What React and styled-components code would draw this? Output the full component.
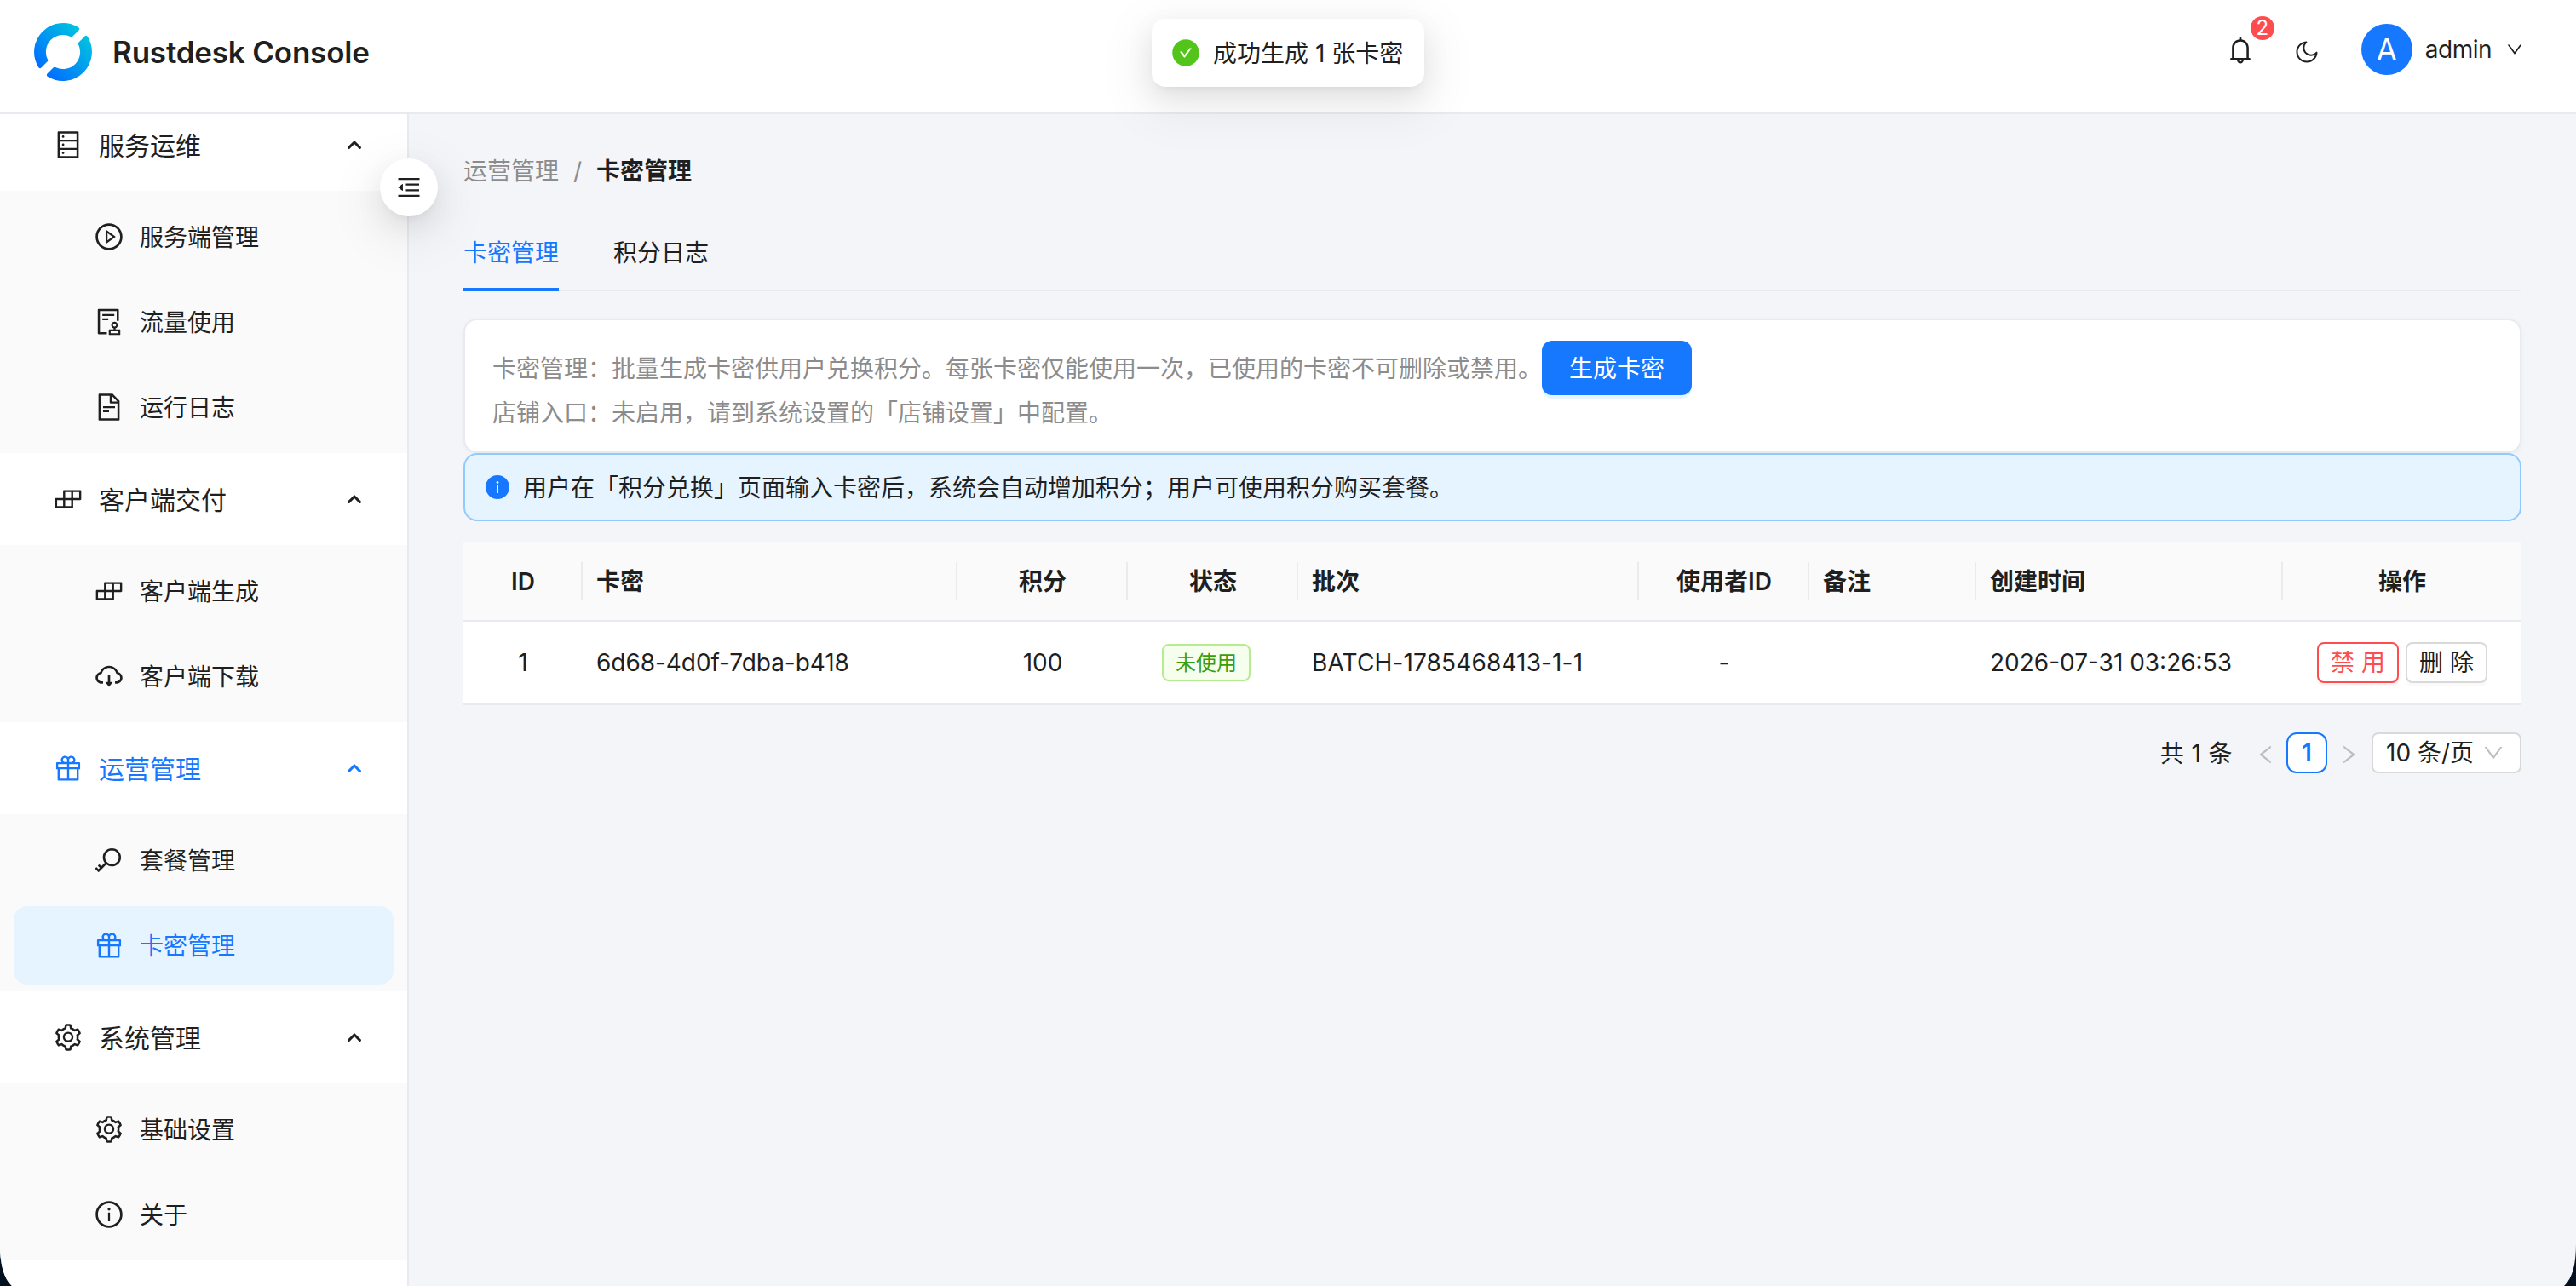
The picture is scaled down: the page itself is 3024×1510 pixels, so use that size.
import React from 'react'
import styled, { createGlobalStyle, css } from 'styled-components'
import {
  AiOutlineDatabase,
  AiOutlinePlayCircle,
  AiOutlineAudit,
  AiOutlineFileText,
  AiOutlineBuild,
  AiOutlineCloudDownload,
  AiOutlineGift,
  AiOutlineKey,
  AiOutlineSetting,
  AiOutlineInfoCircle,
  AiOutlineMenuFold,
  AiOutlineBell,
  AiOutlineDown,
  AiOutlineLeft,
  AiOutlineRight,
  AiFillCheckCircle,
  AiFillInfoCircle,
} from 'react-icons/ai'

const text = '#1f1f1f'
const primary = '#1677ff'
const line = '#e9eaef'

const GlobalStyle = createGlobalStyle`
    * {
        box-sizing: border-box;
    }
    body {
        margin: 0;
        background: #03101f;
        font-family: Inter, "Noto Sans CJK SC", sans-serif;
        font-size: 28px;
        line-height: 44px;
        color: ${text};
    }
    svg {
        display: block;
        flex: none;
    }
`

const Window = styled.div`
    position: relative;
    width: 3024px;
    height: 1510px;
    overflow: hidden;
    display: flex;
    flex-direction: column;
    background: #f3f5f9;
    clip-path: path('M0 0H3024V1460C3024 1484 3020 1501 3010 1510H14C4 1501 0 1484 0 1460Z');
`

const Header = styled.header`
    position: relative;
    z-index: 2;
    flex: none;
    height: 134px;
    display: flex;
    align-items: flex-start;
    justify-content: space-between;
    padding: 0 61px 0 39px;
    background: #fff;
    border-bottom: 2px solid ${line};
`

const Brand = styled.div`
    display: flex;
    align-items: center;
    gap: 23px;
    height: 122px;
`

const BrandName = styled.h1`
    margin: 0;
    font-size: 35px;
    font-weight: 600;
    letter-spacing: -0.2px;
    white-space: nowrap;
`

const HeaderActions = styled.div`
    display: flex;
    align-items: center;
    height: 116px;
`

const BellBox = styled.div`
    position: relative;
    margin: 2px 62px 0 0;
    font-size: 36px;
    width: 36px;
`

const Badge = styled.span`
    position: absolute;
    top: -22px;
    left: 30px;
    width: 28px;
    height: 28px;
    border-radius: 50%;
    background: #ff4d4f;
    color: #fff;
    font-size: 24px;
    line-height: 28px;
    text-align: center;
`

const MoonBox = styled.div`
    margin: 6px 48px 0 -18px;
`

const Avatar = styled.div`
    width: 60px;
    height: 60px;
    border-radius: 50%;
    background: ${primary};
    color: #fff;
    font-size: 35px;
    line-height: 60px;
    text-align: center;
`

const UserName = styled.span`
    margin: 0 16px 0 15px;
    letter-spacing: -0.5px;
`

/* ideographs sit a touch high in the line box, this evens them out */
const Label = styled.span`
    padding-top: ${(p) => p.$drop || 2}px;
`

const Body = styled.div`
    flex: 1;
    min-height: 0;
    display: flex;
`

const Sider = styled.aside`
    position: relative;
    flex: none;
    width: 480px;
    background: #fff;
    border-right: 2px solid ${line};
`

/* the list is scrolled a little under the header */
const Menu = styled.nav`
    margin-top: -18px;
`

const item = css`
    display: flex;
    align-items: center;
    gap: 18px;
    height: 92px;
    margin: 0 16px;
    border-radius: 16px;
    color: ${(p) => (p.$active ? primary : text)};

    svg {
        font-size: 36px;
    }
`

const GroupTitle = styled.div`
    ${item}
    height: 108px;
    padding: 0 38px 0 46px;
    font-size: 30px;

    span {
        flex: 1;
    }
`

const SubMenu = styled.div`
    display: flex;
    flex-direction: column;
    gap: 8px;
    padding: 8px 0;
    background: #fafafa;
`

const MenuItem = styled.div`
    ${item}
    padding: 0 32px 0 94px;
    background: ${(p) => (p.$active ? '#e6f4ff' : 'transparent')};
`

const FoldButton = styled.button`
    position: absolute;
    z-index: 1;
    top: 52px;
    left: 446px;
    width: 68px;
    height: 68px;
    display: flex;
    align-items: center;
    justify-content: center;
    padding: 0;
    border: none;
    border-radius: 50%;
    background: #fff;
    color: ${text};
    font-size: 32px;
    box-shadow:
        0 12px 32px 0 rgba(0, 0, 0, 0.08),
        0 6px 12px -8px rgba(0, 0, 0, 0.12),
        0 18px 56px 16px rgba(0, 0, 0, 0.05);
`

const Content = styled.main`
    flex: 1;
    min-width: 0;
    padding: 45px 64px 0;
`

const Breadcrumb = styled.div`
    display: flex;
    color: #8c8c8c;

    i {
        width: 44px;
        text-align: center;
        font-style: normal;
    }

    b {
        font-weight: 600;
        color: ${text};
    }
`

const Tabs = styled.div`
    display: flex;
    gap: 64px;
    height: 92px;
    margin: 27px 0 32px;
    border-bottom: 2px solid ${line};
`

const Tab = styled.div`
    height: 92px;
    padding-top: 25px;
    color: ${(p) => (p.$active ? primary : text)};
    border-bottom: 4px solid ${(p) => (p.$active ? primary : 'transparent')};
`

const Card = styled.section`
    height: 158px;
    padding: 24px 32px;
    background: #fff;
    border: 2px solid ${line};
    border-radius: 16px;
    box-shadow: 0 2px 6px rgba(0, 0, 0, 0.04);
    color: #8c8c8c;
`

const CardLine = styled.div`
    display: flex;
    align-items: center;
    height: ${(p) => p.$height}px;
`

const PrimaryButton = styled.button`
    height: 64px;
    padding: 1px 32px 0;
    margin-top: 2px;
    border: none;
    border-radius: 12px;
    background: ${primary};
    box-shadow: 0 4px 0 rgba(5, 145, 255, 0.1);
    color: #fff;
    font: inherit;
`

const Alert = styled.div`
    display: flex;
    align-items: center;
    gap: 14px;
    height: 80px;
    padding: 0 22px;
    margin-bottom: 24px;
    background: #e6f4ff;
    border: 2px solid #91caff;
    border-radius: 16px;

    svg {
        font-size: 32px;
        color: ${primary};
    }
`

const Table = styled.div`
    display: grid;
    grid-template-columns: 140px 440px 200px 200px 400px 200px 196px 360px 280px;
`

const cell = css`
    display: flex;
    align-items: center;
    justify-content: ${(p) => (p.$center ? 'center' : 'flex-start')};
    border-bottom: 2px solid ${line};
    white-space: nowrap;
`

const HeadCell = styled.div`
    ${cell}
    position: relative;
    height: 94px;
    padding: 2px 16px 0;
    background: #fafafa;
    font-weight: 600;

    &::after {
        content: '';
        display: ${(p) => (p.$last ? 'none' : 'block')};
        position: absolute;
        right: 0;
        top: 24px;
        width: 2px;
        height: 44px;
        background: #ebebee;
    }
`

const Cell = styled.div`
    ${cell}
    height: 98px;
    padding: 0 16px;
    background: #fff;
    gap: 8px;
    letter-spacing: ${(p) => p.$spacing || 0}px;
`

const Tag = styled.span`
    height: 44px;
    padding: 1px 14px 0;
    margin-right: 16px;
    border: 2px solid #b7eb8f;
    border-radius: 8px;
    background: #f6ffed;
    color: #389e0d;
    font-size: 24px;
    line-height: 40px;
`

const SmallButton = styled.button`
    width: 96px;
    height: 48px;
    padding: 0;
    border: 2px solid ${(p) => (p.$danger ? '#ff4d4f' : '#d9d9d9')};
    border-radius: 8px;
    background: #fff;
    box-shadow: 0 4px 0 ${(p) => (p.$danger ? 'rgba(255, 38, 5, 0.06)' : 'rgba(0, 0, 0, 0.02)')};
    color: ${(p) => (p.$danger ? '#ff4d4f' : text)};
    font: inherit;
    line-height: 44px;
`

const Pagination = styled.div`
    display: flex;
    align-items: center;
    justify-content: flex-end;
    margin-top: 32px;
    height: 48px;
`

const Total = styled.span`
    margin-right: 15px;
    padding-top: 1px;
    letter-spacing: 0.4px;
`

const PageArrow = styled.span`
    width: 48px;
    display: flex;
    justify-content: center;
    color: #bcbcc0;
    margin-top: 4px;
`

const PageNumber = styled.span`
    width: 48px;
    height: 48px;
    margin-right: 1px;
    border: 2px solid ${primary};
    border-radius: 12px;
    background: #fff;
    color: ${primary};
    font-weight: 600;
    text-align: center;
`

const PageSize = styled.div`
    display: flex;
    align-items: center;
    justify-content: space-between;
    width: 176px;
    height: 48px;
    margin-left: 3px;
    padding: 0 17px 0 15px;
    border: 2px solid #d9d9d9;
    border-radius: 8px;
    background: #fff;

    svg {
        color: #bfbfbf;
    }
`

const Toast = styled.div`
    position: absolute;
    z-index: 3;
    top: 22px;
    left: 1352px;
    width: 320px;
    height: 80px;
    display: flex;
    align-items: center;
    gap: 14px;
    padding: 0 22px;
    border-radius: 16px;
    background: #fff;
    white-space: nowrap;
    box-shadow:
        0 12px 32px 0 rgba(0, 0, 0, 0.08),
        0 6px 12px -8px rgba(0, 0, 0, 0.12),
        0 18px 56px 16px rgba(0, 0, 0, 0.05);

    svg {
        color: #52c41a;
        font-size: 36px;
    }
`

const menu = [
  {
    title: '服务运维',
    icon: AiOutlineDatabase,
    children: [
      { title: '服务端管理', icon: AiOutlinePlayCircle },
      { title: '流量使用', icon: AiOutlineAudit },
      { title: '运行日志', icon: AiOutlineFileText },
    ],
  },
  {
    title: '客户端交付',
    icon: AiOutlineBuild,
    children: [
      { title: '客户端生成', icon: AiOutlineBuild },
      { title: '客户端下载', icon: AiOutlineCloudDownload },
    ],
  },
  {
    title: '运营管理',
    icon: AiOutlineGift,
    active: true,
    children: [
      { title: '套餐管理', icon: AiOutlineKey },
      { title: '卡密管理', icon: AiOutlineGift, active: true },
    ],
  },
  {
    title: '系统管理',
    icon: AiOutlineSetting,
    children: [
      { title: '基础设置', icon: AiOutlineSetting },
      { title: '关于', icon: AiOutlineInfoCircle },
    ],
  },
]

const columns = [
  { title: 'ID', center: true },
  { title: '卡密' },
  { title: '积分', center: true },
  { title: '状态', center: true },
  { title: '批次' },
  { title: '使用者ID', center: true },
  { title: '备注' },
  { title: '创建时间' },
  { title: '操作', center: true },
]

const Logo = () => (
  <svg width="70" height="70" viewBox="-35 -35 70 70">
    <defs>
      <linearGradient id="ring" gradientUnits="userSpaceOnUse" x1="-30" y1="0" x2="30" y2="0">
        <stop offset="0" stopColor="#0071ff" />
        <stop offset="1" stopColor="#00bfe1" />
      </linearGradient>
    </defs>
    <g transform="rotate(-45)" fill="url(#ring)" stroke="url(#ring)" strokeWidth="4" strokeLinejoin="round">
      <path d="M-31.2 -7A32 32 0 0 1 31.2 -7L20.9 -7A22 22 0 0 0 -20.9 -7Z" />
      <path d="M31.2 7A32 32 0 0 1 -31.2 7L-20.9 7A22 22 0 0 0 20.9 7Z" />
    </g>
  </svg>
)

const Moon = () => (
  <svg width="32" height="32" viewBox="0 0 1024 1024" fill="currentColor">
    <path d="M489.5 111.66c30.65-1.8 45.98 36.44 22.58 56.33A243.35 243.35 0 00426 354c0 134.76 109.24 244 244 244 72.58 0 139.9-31.83 186.01-86.08 19.87-23.38 58.07-8.1 56.34 22.53C900.4 745.82 725.15 912 512.5 912 291.31 912 112 732.69 112 511.5c0-211.39 164.29-386.02 374.2-399.65l.2-.01zm-81.15 79.75l-4.11 1.36C271.1 237.94 176 364.09 176 511.5 176 697.34 326.66 848 512.5 848c148.28 0 274.94-96.2 319.45-230.41l.63-1.93-.11.07a307.06 307.06 0 01-159.73 46.26L670 662c-170.1 0-308-137.9-308-308 0-58.6 16.48-114.54 46.27-162.47z" />
  </svg>
)

const Arrow = () => (
  <svg width="16" height="12" viewBox="0 0 16 12" fill="none" stroke="currentColor" strokeWidth="3" strokeLinecap="round">
    <path d="M1.6 9.4L8 3L14.4 9.4" />
  </svg>
)

const App = () => {
  return (
    <>
      <GlobalStyle />
      <Window>
        <Header>
          <Brand>
            <Logo />
            <BrandName>Rustdesk Console</BrandName>
          </Brand>
          <HeaderActions>
            <BellBox>
              <AiOutlineBell />
              <Badge>2</Badge>
            </BellBox>
            <MoonBox>
              <Moon />
            </MoonBox>
            <Avatar>A</Avatar>
            <UserName>admin</UserName>
            <AiOutlineDown size={22} />
          </HeaderActions>
        </Header>

        <Body>
          <Sider>
            <Menu>
              {menu.map(({ title, icon: Icon, active, children }) => (
                <div key={title}>
                  <GroupTitle $active={active}>
                    <Icon />
                    <Label>{title}</Label>
                    <Arrow />
                  </GroupTitle>
                  <SubMenu>
                    {children.map(({ title, icon: ItemIcon, active }) => (
                      <MenuItem key={title} $active={active}>
                        <ItemIcon />
                        <Label>{title}</Label>
                      </MenuItem>
                    ))}
                  </SubMenu>
                </div>
              ))}
            </Menu>
            <FoldButton>
              <AiOutlineMenuFold />
            </FoldButton>
          </Sider>

          <Content>
            <Breadcrumb>
              运营管理<i>/</i>
              <b>卡密管理</b>
            </Breadcrumb>
            <Tabs>
              <Tab $active>卡密管理</Tab>
              <Tab>积分日志</Tab>
            </Tabs>

            <Card>
              <CardLine $height={62}>
                <Label $drop={4}>
                  卡密管理：批量生成卡密供用户兑换积分。每张卡密仅能使用一次，已使用的卡密不可删除或禁用。
                </Label>
                <PrimaryButton>生成卡密</PrimaryButton>
              </CardLine>
              <CardLine $height={44}>
                <Label>店铺入口：未启用，请到系统设置的「店铺设置」中配置。</Label>
              </CardLine>
            </Card>
            <Alert>
              <AiFillInfoCircle />
              <Label>用户在「积分兑换」页面输入卡密后，系统会自动增加积分；用户可使用积分购买套餐。</Label>
            </Alert>

            <Table>
              {columns.map((c, i) => (
                <HeadCell key={c.title} $center={c.center} $last={i === columns.length - 1}>
                  {c.title}
                </HeadCell>
              ))}
              <Cell $center>1</Cell>
              <Cell $spacing={-0.05}>6d68-4d0f-7dba-b418</Cell>
              <Cell $center>100</Cell>
              <Cell $center>
                <Tag>未使用</Tag>
              </Cell>
              <Cell $spacing={0.14}>BATCH-1785468413-1-1</Cell>
              <Cell $center>-</Cell>
              <Cell />
              <Cell>2026-07-31 03:26:53</Cell>
              <Cell $center>
                <SmallButton $danger>禁 用</SmallButton>
                <SmallButton>删 除</SmallButton>
              </Cell>
            </Table>

            <Pagination>
              <Total>共 1 条</Total>
              <PageArrow>
                <AiOutlineLeft />
              </PageArrow>
              <PageNumber>1</PageNumber>
              <PageArrow>
                <AiOutlineRight />
              </PageArrow>
              <PageSize>
                10 条/页
                <AiOutlineDown />
              </PageSize>
            </Pagination>
          </Content>
        </Body>

        <Toast>
          <AiFillCheckCircle />
          <Label>成功生成 1 张卡密</Label>
        </Toast>
      </Window>
    </>
  )
}

export default App
